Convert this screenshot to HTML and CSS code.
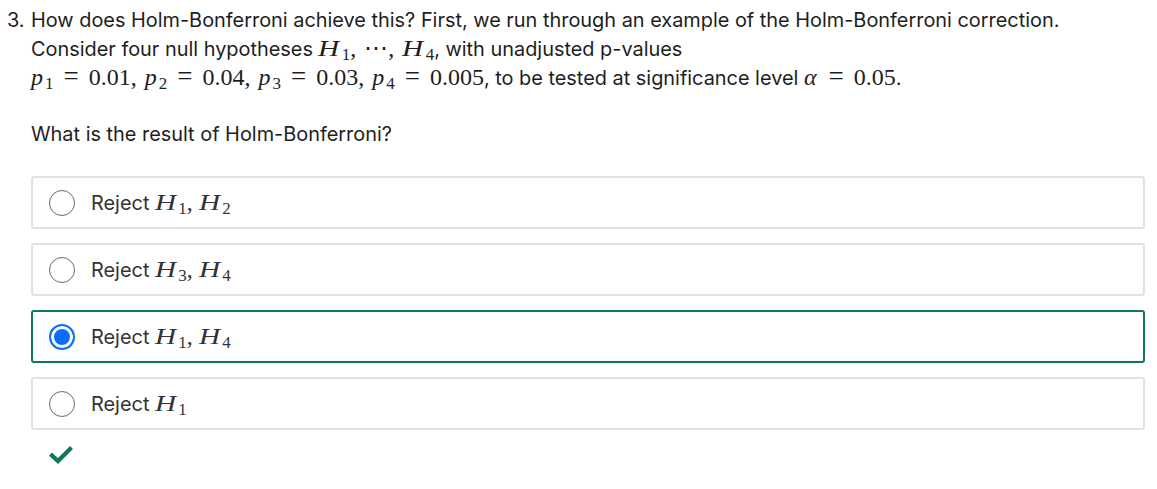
FILE: index.html
```html
<!DOCTYPE html>
<html>
<head>
<meta charset="utf-8">
<link rel="stylesheet" href="styles.css">
</head>
<body>
<div class="question">
  <div class="num">3.</div>
  <div class="content">
    <p class="prompt">How does Holm-Bonferroni achieve this? First, we run through an example of the Holm-Bonferroni correction.<br>Consider four null hypotheses <span class="math"><i class="H">H</i><sub>1</sub><span class="p">,</span><span class="dots">⋯</span><span class="p">,</span><i class="H">H</i><sub>4</sub></span>, with unadjusted p-values<br><span class="math"><i>p</i><sub>1</sub><span class="rel">=</span>0.01<span class="p">,</span><i>p</i><sub>2</sub><span class="rel">=</span>0.04<span class="p">,</span><i>p</i><sub>3</sub><span class="rel">=</span>0.03<span class="p">,</span><i>p</i><sub>4</sub><span class="rel">=</span>0.005</span>, to be tested at significance level <span class="math"><i class="alpha">α</i><span class="rel">=</span>0.05</span>.</p>
    <p class="ask">What is the result of Holm-Bonferroni?</p>
    <div class="options">
      <label class="option">
        <span class="radio"></span>
        <span class="label">Reject <span class="math"><i class="H">H</i><sub>1</sub><span class="p">,</span><i class="H">H</i><sub>2</sub></span></span>
      </label>
      <label class="option">
        <span class="radio"></span>
        <span class="label">Reject <span class="math"><i class="H">H</i><sub>3</sub><span class="p">,</span><i class="H">H</i><sub>4</sub></span></span>
      </label>
      <label class="option selected">
        <span class="radio checked"></span>
        <span class="label">Reject <span class="math"><i class="H">H</i><sub>1</sub><span class="p">,</span><i class="H">H</i><sub>4</sub></span></span>
      </label>
      <label class="option">
        <span class="radio"></span>
        <span class="label">Reject <span class="math"><i class="H">H</i><sub>1</sub></span></span>
      </label>
    </div>
    <div class="result">
      <svg width="24" height="18" viewBox="0 0 24 18"><polyline points="3,9.5 9,15 21,3" fill="none" stroke="#0d7a50" stroke-width="4.2" stroke-linecap="square" stroke-linejoin="miter"/></svg>
    </div>
  </div>
</div>
</body>
</html>
```

FILE: styles.css
```css
html, body {
  margin: 0;
  padding: 0;
  background: #ffffff;
}
body {
  font-family: Inter, "Noto Sans", sans-serif;
  font-size: 19.9px;
  line-height: 28px;
  color: #1e1e1e;
}
.question {
  display: flex;
  padding: 6px 12px 0 7px;
}
.num {
  width: 24px;
  flex: none;
}
.content {
  flex: 1;
}
p {
  margin: 0;
}
.prompt {
  margin-bottom: 28px;
}
.math {
  font-family: "Liberation Serif", "DejaVu Serif", serif;
  font-size: 24px;
  white-space: nowrap;
}
.math i {
  font-style: italic;
}
.math i.H {
  display: inline-block;
  transform: scaleX(1.22);
  transform-origin: left center;
  margin-right: 4px;
}
.math i.alpha {
  margin-right: 2px;
}
.math sub {
  font-size: 17px;
  vertical-align: baseline;
  position: relative;
  top: 4px;
  line-height: 0;
  margin-left: 2px;
}
.math .rel {
  font-size: 27px;
  line-height: 0;
  margin: 0 10px;
}
.math .p {
  margin-right: 8px;
}
.math .dots {
  margin: 0;
}
.options {
  margin-top: 28px;
  display: flex;
  flex-direction: column;
  gap: 14px;
}
.option {
  display: flex;
  align-items: center;
  height: 53px;
  box-sizing: border-box;
  border: 2px solid #e1e1e1;
  border-radius: 3px;
  padding-left: 16px;
  color: #333333;
}
.option.selected {
  border-color: #0e7a4f;
}
.option .math .p {
  margin-right: 6px;
}
.radio {
  width: 26px;
  height: 26px;
  box-sizing: border-box;
  border: 1.5px solid #6b6b6b;
  border-radius: 50%;
  flex: none;
  margin-right: 16px;
}
.radio.checked {
  border: 2px solid #0b6cff;
  background: #0b6cff;
  box-shadow: inset 0 0 0 3px #ffffff;
}
.result {
  margin-top: 16px;
  padding-left: 18px;
  height: 20px;
}
.result svg {
  display: block;
}
```
